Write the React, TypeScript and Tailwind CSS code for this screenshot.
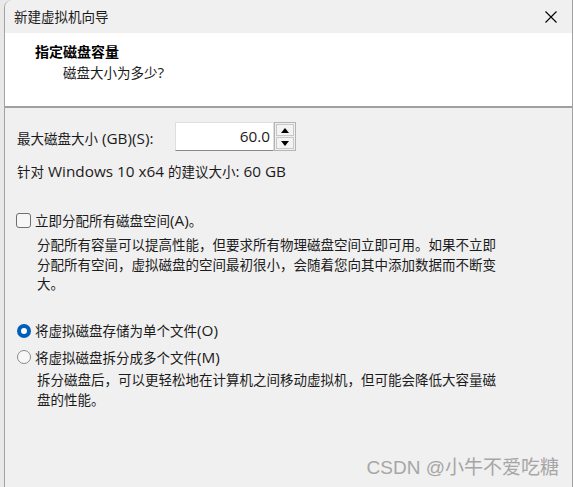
import React from 'react';

const FONT = { fontFamily: '"Open Sans", "Noto Sans CJK SC", sans-serif' };

// latin runs are set a little larger, the way Segoe UI sits next to YaHei
const L: React.FC<{ children: React.ReactNode }> = ({ children }) => (
  <span className="text-[15.3px]">{children}</span>
);

const Radio: React.FC<{ checked?: boolean }> = ({ checked }) =>
  checked ? (
    <span className="flex h-[14px] w-[14px] items-center justify-center rounded-full bg-[#005fb8]">
      <span className="h-[6px] w-[6px] rounded-full bg-white" />
    </span>
  ) : (
    <span className="h-[14px] w-[14px] rounded-full border border-[#8a8a8a] bg-[#f7f7f7]" />
  );

const Spinner: React.FC = () => (
  <div className="flex h-[29px] w-[22px] flex-col border border-[#b4b4b4] bg-[#f0f0f0] p-[1px] gap-[1px]">
    <div className="flex flex-1 items-center justify-center border border-[#c8c8c8] bg-[#f3f3f3]">
      <svg width="8" height="5" viewBox="0 0 8 5">
        <path d="M0 5 L4 0 L8 5 Z" fill="#000" />
      </svg>
    </div>
    <div className="flex flex-1 items-center justify-center border border-[#c8c8c8] bg-[#f3f3f3]">
      <svg width="8" height="5" viewBox="0 0 8 5">
        <path d="M0 0 L8 0 L4 5 Z" fill="#000" />
      </svg>
    </div>
  </div>
);

export default function App() {
  return (
    <div className="relative flex h-[487px] w-[574px] overflow-hidden bg-[#e9e9e9]" style={FONT}>
      <div className="ml-[4px] flex h-full w-[569px] flex-col rounded-tl-[8px] border-l border-r border-[#a3a3a3] bg-[#f0f0f0] text-[13.5px] text-[#1b1b1b]">
        {/* title bar */}
        <div className="flex h-[33px] shrink-0 items-center justify-between rounded-tl-[8px] bg-[#f0f0f0] pl-[9px] pr-[15px]">
          <span className="leading-[20px]">新建虚拟机向导</span>
          <svg width="12" height="12" viewBox="0 0 12 12">
            <path d="M0.5 0.5 L11.5 11.5 M11.5 0.5 L0.5 11.5" stroke="#000" strokeWidth="1.1" />
          </svg>
        </div>

        {/* header */}
        <div className="h-[75px] shrink-0 border-b-2 border-[#a0a0a0] bg-white pt-[9px]">
          <div className="pl-[30px] text-[14px] font-bold leading-[20px] text-black">指定磁盘容量</div>
          <div className="pl-[58px] leading-[20px]">磁盘大小为多少<L>?</L></div>
        </div>

        {/* body */}
        <div className="flex flex-col pl-[12px]">
          <div className="mt-[14px] flex h-[29px] items-center">
            <span className="w-[158px] pt-[3px] leading-[20px]">最大磁盘大小<L> (GB)(S):</L></span>
            <div className="flex h-[29px] w-[99px] items-center justify-end border border-[#dedede] border-b-[#8a8a8a] bg-white pr-[3px] text-[15.3px]">
              60.0
            </div>
            <Spinner />
          </div>

          <div className="mt-[10px] leading-[20px]">
            针对<L> Windows 10 x64 </L>的建议大小<L>: 60 GB</L>
          </div>

          <div className="mt-[28px] flex h-[20px] items-center gap-[4px]">
            <span className="ml-[-1px] h-[15px] w-[15px] rounded-[3px] border border-[#6f6f6f] bg-[#f6f6f6]" />
            <span className="leading-[20px]">立即分配所有磁盘空间<L>(A)</L>。</span>
          </div>
          <p className="mt-[6px] w-[465px] pl-[20px] leading-[19.5px] box-content">
            分配所有容量可以提高性能，但要求所有物理磁盘空间立即可用。如果不立即分配所有空间，虚拟磁盘的空间最初很小，会随着您向其中添加数据而不断变大。
          </p>

          <div className="mt-[26px] flex h-[20px] items-center gap-[4px]">
            <Radio checked />
            <span className="leading-[20px]">将虚拟磁盘存储为单个文件<L>(O)</L></span>
          </div>
          <div className="mt-[6.5px] flex h-[20px] items-center gap-[4px]">
            <Radio />
            <span className="leading-[20px]">将虚拟磁盘拆分成多个文件<L>(M)</L></span>
          </div>
          <p className="mt-[4px] w-[465px] pl-[20px] leading-[19.5px] box-content">
            拆分磁盘后，可以更轻松地在计算机之间移动虚拟机，但可能会降低大容量磁盘的性能。
          </p>
        </div>
      </div>
      <div className="w-[1px] bg-white" />

      {/* watermark */}
      <div className="absolute bottom-[8px] right-[15px] text-[19px] leading-[22px] text-[#a6a6a6]" style={{ fontFamily: '"Liberation Sans", "Noto Sans CJK SC", sans-serif' }}>
        CSDN @小牛不爱吃糖
      </div>
    </div>
  );
}
